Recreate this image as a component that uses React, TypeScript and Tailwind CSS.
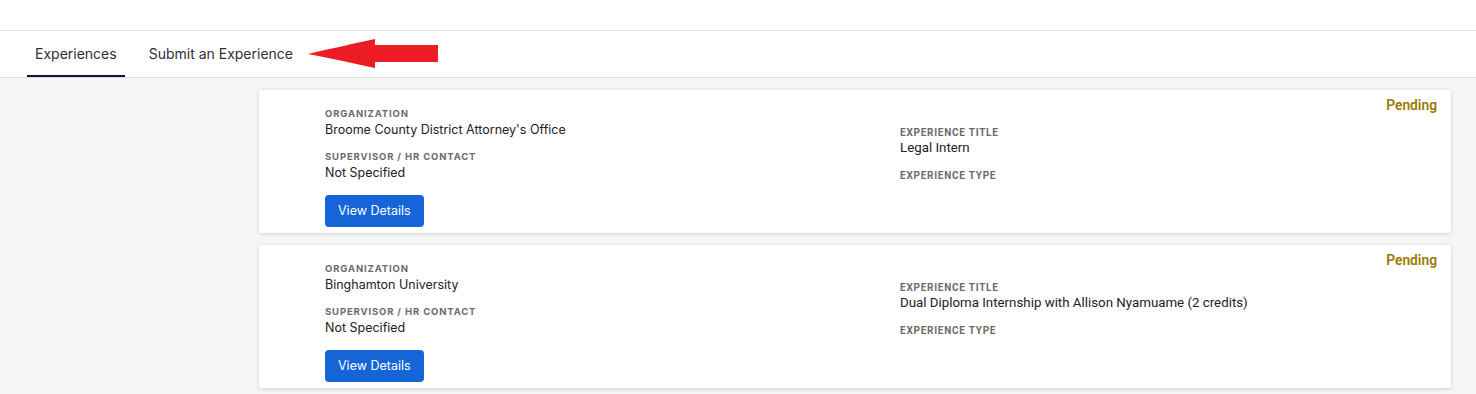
import React from 'react';

interface Experience {
  organization: string;
  supervisor: string;
  title: string;
  type: string;
  status: string;
}

const experiences: Experience[] = [
  {
    organization: "Broome County District Attorney's Office",
    supervisor: 'Not Specified',
    title: 'Legal Intern',
    type: '',
    status: 'Pending',
  },
  {
    organization: 'Binghamton University',
    supervisor: 'Not Specified',
    title: 'Dual Diploma Internship with Allison Nyamuame (2 credits)',
    type: '',
    status: 'Pending',
  },
];

const inter = "font-['Inter','Noto_Sans',sans-serif]";
const roboto = "font-['Roboto','Noto_Sans',sans-serif]";

function Label({ children, className = '' }: { children: React.ReactNode; className?: string }) {
  return (
    <p className={`text-[9.5px] leading-[12px] font-bold uppercase tracking-[0.09em] text-[#6b6b6b] ${className}`}>
      {children}
    </p>
  );
}

function ExperienceCard({ exp }: { exp: Experience }) {
  return (
    <div className="relative bg-white rounded-[2px] shadow-[0_1px_4px_rgba(0,0,0,0.14)] h-[143px] flex">
      <span className={`absolute top-[6px] right-[14px] text-[13.8px] leading-[18px] font-semibold text-[#9b7a00] ${roboto}`}>
        {exp.status}
      </span>

      {/* Columna izquierda */}
      <div className={`w-[641px] pl-[66px] pt-[18px] ${inter}`}>
        <Label>Organization</Label>
        <p className="mt-[2px] text-[12.5px] leading-[16px] text-[#222]">{exp.organization}</p>
        <Label className="mt-[13px]">Supervisor / HR Contact</Label>
        <p className="mt-[2px] text-[12.5px] leading-[16px] text-[#222]">{exp.supervisor}</p>
        <button className="mt-[14px] h-[32px] px-[13px] rounded-[4px] bg-[#1565d8] text-white text-[12.5px]">
          View Details
        </button>
      </div>

      {/* Columna derecha */}
      <div className={`flex-1 pt-[37px] ${roboto}`}>
        <Label className="text-[10px] tracking-[0.075em]">Experience Title</Label>
        <p className="mt-[1px] text-[13.3px] leading-[16px] text-[#222]">{exp.title}</p>
        <Label className="mt-[14px] text-[10px] tracking-[0.075em]">Experience Type</Label>
        {exp.type && <p className="mt-[1px] text-[13.3px] leading-[16px] text-[#222]">{exp.type}</p>}
      </div>
    </div>
  );
}

export default function App() {
  return (
    <div className={`min-h-[394px] bg-[#f5f5f5] ${inter}`}>
      <div className="h-[31px] bg-white border-b border-[#e3e3e3]" />
      <div className="relative h-[47px] bg-white border-b border-[#dcdcdc] flex items-stretch pl-[27px] gap-[16px]">
        <div className="relative flex items-center pb-[2px] px-[8px] text-[14px] text-[#2f2f3a]">
          Experiences
          <span className="absolute left-0 right-0 bottom-[0px] h-[2px] bg-[#15133c]" />
        </div>
        <div className="flex items-center pb-[2px] px-[8px] text-[14px] text-[#2f2f3a]">Submit an Experience</div>
        <svg className="absolute left-[308px] top-[8px]" width="131" height="30" viewBox="0 0 131 30">
          <path d="M0 15 C25 9 45 5 67 0 L67 6 L130 6 L130 23 L67 23 L67 29 C45 24 25 20 0 15 Z" fill="#ed1c24" />
        </svg>
      </div>
      <div className="pl-[259px] pr-[25px] pt-[12px] flex flex-col gap-[12px]">
        {experiences.map((e, i) => (
          <ExperienceCard key={i} exp={e} />
        ))}
      </div>
    </div>
  );
}
